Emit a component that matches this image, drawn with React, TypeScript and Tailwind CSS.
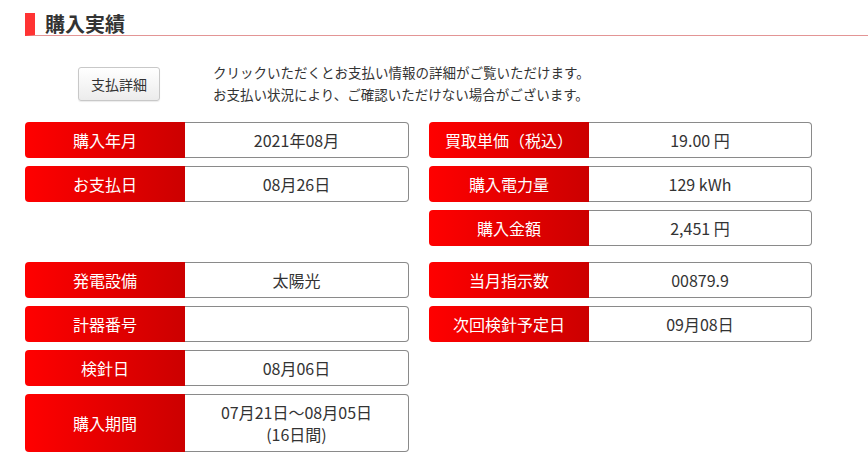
import React from "react"

type Item = { label: string; value?: React.ReactNode; tall?: boolean }

function Row({ label, value, tall }: Item) {
  return (
    <div className={`flex ${tall ? "h-[58px]" : "h-[36px]"}`}>
      <div className="w-[160px] shrink-0 rounded-l-[4px] bg-gradient-to-r from-[#ff0000] to-[#cc0000] flex items-center justify-center text-white text-[16px]">
        {label}
      </div>
      <div className="flex-1 border border-l-0 border-[#8a8a8a] rounded-r-[4px] bg-white flex items-center justify-center text-center text-[#333] text-[16px] leading-[22px]">
        {value}
      </div>
    </div>
  )
}

function Column({ items }: { items: Item[] }) {
  return (
    <div className="flex flex-col gap-2">
      {items.map((it) => (
        <Row key={it.label} {...it} />
      ))}
    </div>
  )
}

export default function App() {
  const group1Left: Item[] = [
    { label: "購入年月", value: "2021年08月" },
    { label: "お支払日", value: "08月26日" },
  ]
  const group1Right: Item[] = [
    { label: "買取単価（税込）", value: "19.00\u00a0円" },
    { label: "購入電力量", value: "129\u00a0kWh" },
    { label: "購入金額", value: "2,451\u00a0円" },
  ]
  const group2Left: Item[] = [
    { label: "発電設備", value: "太陽光" },
    { label: "計器番号", value: "" },
    { label: "検針日", value: "08月06日" },
    {
      label: "購入期間",
      value: (
        <span>
          07月21日～08月05日
          <br />
          (16日間)
        </span>
      ),
      tall: true,
    },
  ]
  const group2Right: Item[] = [
    { label: "当月指示数", value: "00879.9" },
    { label: "次回検針予定日", value: "09月08日" },
  ]

  return (
    <div
      className="w-[868px] h-[461px] bg-white overflow-hidden pt-[13px] pl-[25px]"
      style={{ fontFamily: '"Noto Sans CJK JP", "Noto Sans", sans-serif' }}
    >
      {/* Heading */}
      <div className="h-[23px] border-l-[10px] border-[#ff3333] border-b border-b-[#e39595] pl-[10px] flex items-center">
        <h2 className="text-[20px] font-bold text-[#333] leading-none">購入実績</h2>
      </div>

      {/* Detail button + note */}
      <div className="flex mt-[25px]">
        <div className="w-[188px] flex justify-center pt-[6px]">
          <button className="w-[82px] h-[34px] rounded-[3px] border border-[#c8c8c8] bg-gradient-to-b from-white to-[#ececec] text-[14px] text-[#333] shadow-[0_1px_1px_rgba(0,0,0,0.08)]">
            支払詳細
          </button>
        </div>
        <p className="text-[13.5px] leading-[22px] text-[#333]">
          クリックいただくとお支払い情報の詳細がご覧いただけます。
          <br />
          お支払い状況により、ご確認いただけない場合がございます。
        </p>
      </div>

      {/* Group 1 */}
      <div className="grid grid-cols-[384px_383px] gap-x-5 items-start mt-[17px]">
        <Column items={group1Left} />
        <Column items={group1Right} />
      </div>

      {/* Group 2 */}
      <div className="grid grid-cols-[384px_383px] gap-x-5 items-start mt-4">
        <Column items={group2Left} />
        <Column items={group2Right} />
      </div>
    </div>
  )
}
